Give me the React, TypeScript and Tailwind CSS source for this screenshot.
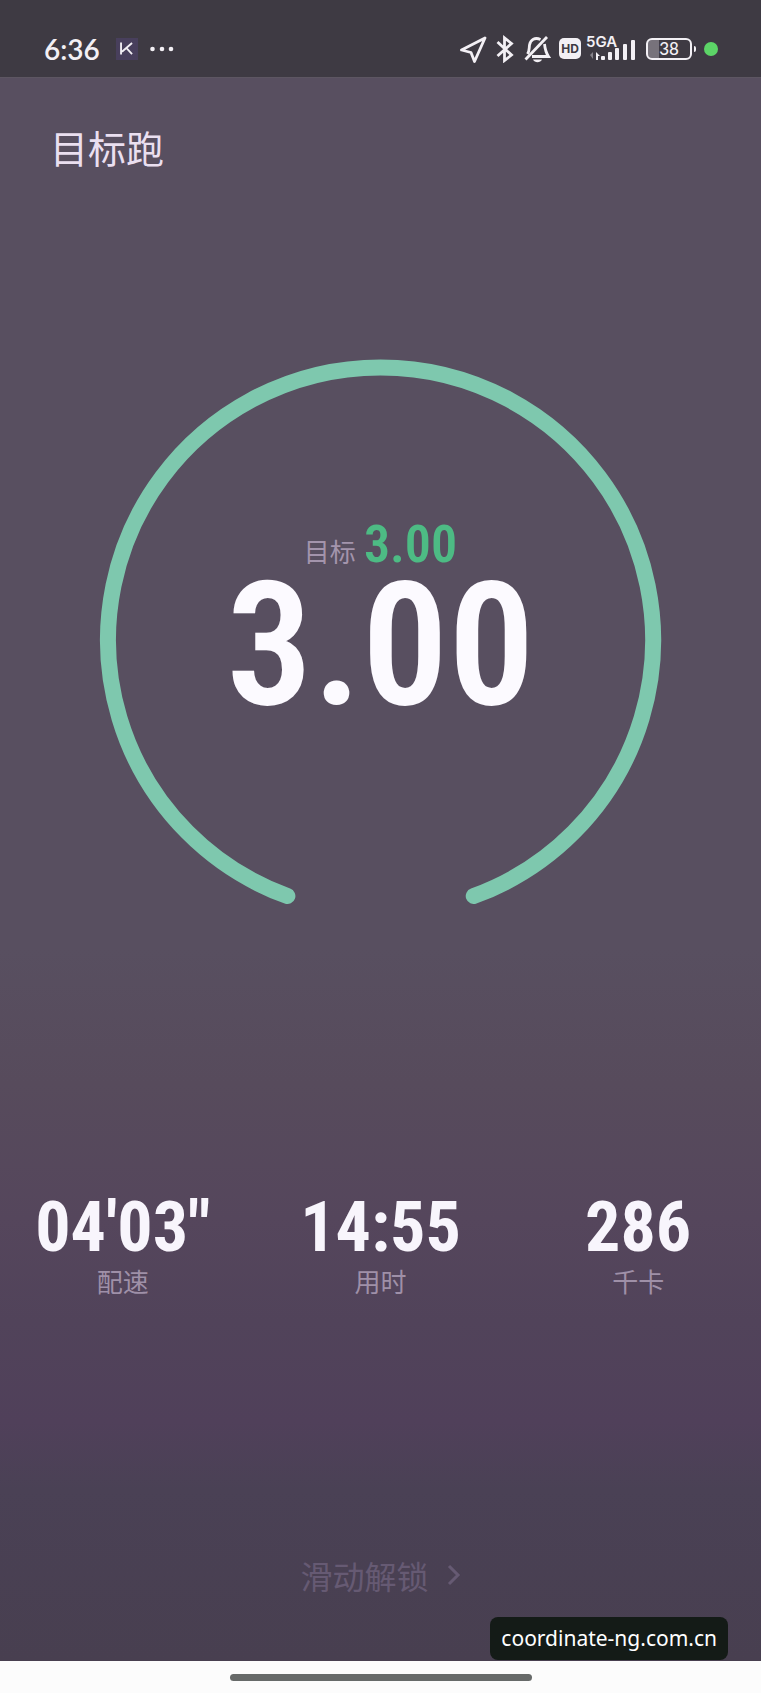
import React from 'react';

interface Stat {
  value: string;
  label: string;
}

const stats: Stat[] = [
  { value: `04'03"`, label: '配速' },
  { value: '14:55', label: '用时' },
  { value: '286', label: '千卡' },
];

const SIGNAL_BARS = [
  { x: 15, h: 4 },
  { x: 22, h: 8 },
  { x: 29, h: 12 },
  { x: 37, h: 16 },
  { x: 45, h: 20 },
];

const StatusBar: React.FC = () => (
  <header className="flex h-[78px] items-center justify-between border-b border-[#5d5662] bg-[#3e3a43] pt-5 pr-[43px] pl-11 text-[#f3f0f5]">
    <div className="flex items-center">
      <span className="font-['Lato',sans-serif] text-[28px] leading-8 font-semibold">6:36</span>
      <span className="ml-4 flex size-[22px] items-center justify-center bg-[#483f5c]">
        <svg viewBox="0 0 24 24" className="size-[22px]" fill="none" stroke="currentColor" strokeWidth="2">
          <path d="M5.5 5v13M17.5 5.5 L6.5 15 M11.5 11 L17.5 17.5" />
        </svg>
      </span>
      <svg viewBox="0 0 24 6" className="ml-3 h-[6px] w-6" fill="currentColor">
        <circle cx="2.5" cy="3" r="2.3" />
        <circle cx="12" cy="3" r="2.3" />
        <circle cx="21" cy="3" r="2.3" />
      </svg>
    </div>

    <div className="flex items-center gap-2">
      {/* location */}
      <svg viewBox="0 0 28 28" className="size-7" fill="none" stroke="currentColor" strokeWidth="2.8" strokeLinejoin="round">
        <path d="M26 3 L2.5 15 L12 17.5 L15.5 26.5 Z" />
      </svg>
      {/* bluetooth */}
      <svg viewBox="0 0 20 28" className="h-7 w-5" fill="none" stroke="currentColor" strokeWidth="2.8">
        <path d="M2.5 7 L16.5 20 L9.5 25.5 V3 L16.5 8.5 L2.5 21" />
      </svg>
      {/* muted bell */}
      <svg viewBox="0 0 28 28" className="size-7" fill="none" stroke="currentColor" strokeWidth="2.8">
        <path d="M24 2 L2.5 24.5" />
        <path d="M4.5 19 C6.5 16 6 14 6.5 10 C7.5 4.5 12 2 17.5 4.5" />
        <path d="M21.5 9 C22 14 22.5 17 25.5 21.5 H9" />
        <path d="M10 24.5 H19 C17.5 28 11.5 28 10 24.5Z" fill="currentColor" stroke="none" />
      </svg>
      <span className="flex h-[21px] w-[22px] items-center justify-center rounded-[5px] bg-[#f3f0f5] font-['Inter',sans-serif] text-[12px] leading-none font-bold text-[#3e3a43]">
        HD
      </span>
      <div className="relative -ml-[3px] h-7 w-[50px]">
        <svg viewBox="0 0 50 28" className="h-7 w-[50px]" fill="currentColor">
          <path d="M4 20 L7 17 V24Z" opacity="0.4" />
          <path d="M10 17 L14 21 H12 V25 H10Z" />
          {SIGNAL_BARS.map(bar => (
            <rect key={bar.x} x={bar.x} y={25 - bar.h} width="4" height={bar.h} rx="1" />
          ))}
        </svg>
        <span className="absolute top-0 left-0 font-['Inter',sans-serif] text-[15px] leading-[14px] font-semibold">
          5GA
        </span>
      </div>
      <div className="ml-[2px] flex items-center gap-[2px]">
        <span className="flex h-[22px] w-[46px] items-center justify-center rounded-[6px] border-2 border-current bg-linear-to-r from-[#77727b] from-25% to-transparent to-25% font-['Lato',sans-serif] text-[17px] leading-none font-medium">
          38
        </span>
        <span className="h-[6px] w-[2px] rounded-r-sm bg-current" />
      </div>
      <span className="size-[14px] rounded-full bg-[#5cd467]" />
    </div>
  </header>
);

// Full ring with an opening at the bottom, the readout sits on top of it
const GoalRing: React.FC = () => (
  <section className="mx-auto mt-[187px] grid w-[74%]">
    <svg viewBox="0 0 562 546" className="col-start-1 row-start-1 w-full" fill="none">
      <path
        d="M188 536 A272 272 0 1 1 374 536"
        stroke="#7ec8ae"
        strokeWidth="16"
        strokeLinecap="round"
      />
    </svg>
    <div className="col-start-1 row-start-1 flex flex-col items-center pt-[166px]">
      <div className="flex h-10 items-baseline gap-2 leading-10">
        <span className="text-[26px] text-[#a394ac]">目标</span>
        <span className="font-['Roboto_Condensed','Liberation_Sans_Narrow','Roboto',sans-serif] text-[52px] font-semibold text-[#4dbb84]">
          3.00
        </span>
      </div>
      <p className="font-['Roboto_Condensed','Liberation_Sans_Narrow','Roboto',sans-serif] text-[172px] leading-[160px] font-semibold text-[#fcfaff]">
        3.00
      </p>
    </div>
  </section>
);

const App: React.FC = () => {
  return (
    <div className="relative flex min-h-screen flex-col bg-[linear-gradient(#584f60_56%,#574b5c_64%,#55465c_72%,#51435a_78%,#50405a_84%,#4a4155_88%,#483f50_98%)] font-['Noto_Sans_CJK_SC',sans-serif]">
      <StatusBar />

      <h1 className="pt-11 pl-[50px] text-[38px] leading-[50px] font-normal text-[#eadff0]">目标跑</h1>

      <GoalRing />

      <section className="mt-[285px] grid grid-cols-3 gap-3 text-center">
        {stats.map(stat => (
          <div key={stat.label}>
            <p className="font-['Roboto_Condensed','Liberation_Sans_Narrow','Roboto',sans-serif] text-[70px] leading-[72px] font-bold whitespace-nowrap text-[#f8f5fc]">
              {stat.value}
            </p>
            <p className="text-[26px] leading-9 text-[#9f90a8]">{stat.label}</p>
          </div>
        ))}
      </section>

      <button type="button" className="mx-auto mt-auto mb-[62px] flex items-center gap-4 text-[32px] leading-[48px] text-[#665a73]">
        滑动解锁
        <svg viewBox="0 0 16 24" className="h-6 w-4" fill="none" stroke="currentColor" strokeWidth="3">
          <path d="M4 3 L13 12 L4 21" />
        </svg>
      </button>

      <footer className="flex h-8 items-center justify-center bg-[#fcfcfc]">
        <span className="h-[7px] w-[302px] rounded-full bg-[#676a69]" />
      </footer>

      {/* site badge */}
      <span className="absolute right-[33px] bottom-[33px] rounded-[8px] bg-[#141b17] px-[11px] font-['Noto_Sans',sans-serif] text-[21px] leading-[43px] text-white">
        coordinate-ng.com.cn
      </span>
    </div>
  );
};

export default App;
